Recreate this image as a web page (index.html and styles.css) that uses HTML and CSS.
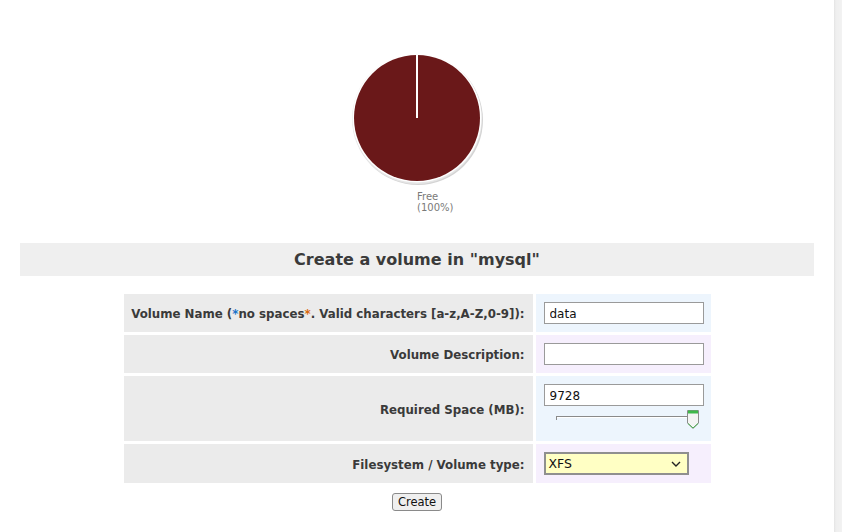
FILE: index.html
```html
<!DOCTYPE html>
<html>
<head>
<meta charset="utf-8">
<title>Create volume</title>
<link rel="stylesheet" href="styles.css">
</head>
<body>
<div class="page">
  <main class="content">
    <section class="chart">
      <svg class="pie" width="134" height="134" viewBox="0 0 134 134">
        <circle cx="68" cy="68" r="65" fill="#d4d4d4"/>
        <circle cx="67" cy="67" r="65" fill="#e6e6e6"/>
        <circle cx="67" cy="66" r="64.5" fill="#ffffff"/>
        <circle cx="67" cy="66" r="63" fill="#6a1819"/>
        <line x1="67" y1="2" x2="67" y2="66" stroke="#ffffff" stroke-width="2"/>
      </svg>
      <div class="legend">Free<br>(100%)</div>
    </section>

    <h2 class="title">Create a volume in "mysql"</h2>

    <form class="form">
      <div class="label">Volume Name (<span class="ast-a">*</span>no spaces<span class="ast-b">*</span>. Valid characters [a-z,A-Z,0-9]):</div>
      <div class="field blue"><input class="text" type="text" value="data"></div>

      <div class="label">Volume Description:</div>
      <div class="field lilac"><input class="text" type="text" value=""></div>

      <div class="label">Required Space (MB):</div>
      <div class="field blue">
        <input class="text" type="text" value="9728">
        <svg class="slider" width="146" height="22" viewBox="0 0 146 22">
          <line x1="2.5" y1="7" x2="2.5" y2="11" stroke="#8a8a8a" stroke-width="1"/>
          <line x1="2" y1="7.5" x2="136" y2="7.5" stroke="#8a8a8a" stroke-width="1"/>
          <line x1="3" y1="8.5" x2="136" y2="8.5" stroke="#ffffff" stroke-width="1"/>
          <path d="M133.5 1.5 H144.5 V14 L139 19.5 L133.5 14 Z" fill="#f4f4f4" stroke="#8c8c8c" stroke-width="1"/>
          <rect x="134" y="1.5" width="10" height="3" fill="#3fb84a"/>
          <path d="M134 14.5 L139 19 L144 14.5" fill="none" stroke="#4caf50" stroke-width="1"/>
        </svg>
      </div>

      <div class="label">Filesystem / Volume type:</div>
      <div class="field lilac">
        <div class="select"><span>XFS</span><svg width="10" height="6" viewBox="0 0 10 6"><path d="M1 1 L5 5 L9 1" fill="none" stroke="#222" stroke-width="1.4"/></svg></div>
      </div>
    </form>

    <div class="actions"><button class="btn" type="button">Create</button></div>
  </main>
  <div class="rail"></div>
</div>
</body>
</html>
```

FILE: styles.css
```css
* { box-sizing: border-box; }
html, body { margin: 0; padding: 0; background: #ffffff; }
body { font-family: "DejaVu Sans", Verdana, sans-serif; color: #333; }

.page { display: flex; width: 842px; min-height: 532px; }
.content { width: 834px; }
.rail {
  width: 8px;
  background: linear-gradient(to right, #e4e4e4 0, #efefef 2px, #f2f2f2 100%);
}

.chart { padding-top: 52px; display: flex; flex-direction: column; align-items: center; }
.pie { display: block; }
.legend {
  align-self: stretch;
  padding-left: 417px;
  margin-top: 6px;
  font-size: 10px;
  line-height: 10.5px;
  color: #7a7a7a;
}

.title {
  margin: 30px 20px 0;
  height: 33px;
  line-height: 34px;
  background: #efefef;
  text-align: center;
  font-size: 16px;
  font-weight: bold;
  color: #3a3a3a;
}

.form {
  margin: 18px auto 0;
  width: 587px;
  display: grid;
  grid-template-columns: 409px 175px;
  grid-template-rows: 38px 38px 65px 39px;
  gap: 3px;
}
.label {
  background: #ebebeb;
  display: flex;
  align-items: center;
  justify-content: flex-end;
  padding: 2px 8px 0 0;
  font-size: 11.8px;
  font-weight: bold;
  color: #3a3a3a;
  white-space: nowrap;
}
.ast-a { color: #1a73c9; }
.ast-b { color: #d9690f; }

.field { padding: 8px 0 0 8px; }
.blue { background: #edf5fd; }
.lilac { background: #f6effd; }

.text {
  display: block;
  width: 160px;
  height: 22px;
  margin: 0;
  border: 1px solid #9a9a9a;
  padding: 1px 5px 0;
  font-family: "DejaVu Sans", Verdana, sans-serif;
  font-size: 12px;
  color: #111;
  background: #fff;
  outline: none;
}
.slider { display: block; margin: 3px 0 0 10px; }

.select {
  width: 145px;
  height: 23px;
  border: 2px solid #8f8f8f;
  background: #ffffc4;
  display: flex;
  align-items: center;
  justify-content: space-between;
  padding: 0 6px 0 3px;
  font-size: 12.5px;
  color: #111;
}

.actions { margin-top: 10px; display: flex; justify-content: center; }
.btn {
  width: 50px;
  height: 18px;
  padding: 0;
  border: 1px solid #8a8a8a;
  border-radius: 3px;
  background: #efefef;
  font-family: "DejaVu Sans", Verdana, sans-serif;
  font-size: 11.5px;
  color: #111;
}
```
